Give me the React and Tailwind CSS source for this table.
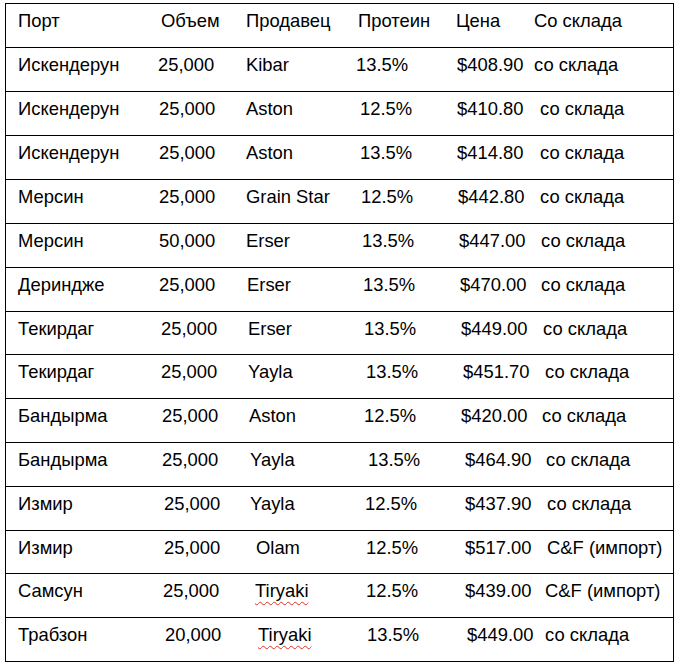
import React from "react";

const COLS = ["w-[138px]", "w-[88px]", "w-[110px]", "w-[98px]", "w-[80px]", "flex-1"];

const rows = [
  { h: "h-[44px]", c: [["Порт", "pl-[0px]"], ["Объем", "pl-[5px]"], ["Продавец", "pl-[2px]"], ["Протеин", "pl-[4px]"], ["Цена", "pl-[4px]"], ["Со склада", "pl-[2px]"]] },
  { h: "h-[44px]", c: [["Искендерун", "pl-[0px]"], ["25,000", "pl-[2px]"], ["Kibar", "pl-[2px]"], ["13.5%", "pl-[2px]"], ["$408.90", "pl-[5px]"], ["со склада", "pl-[2px]"]] },
  { h: "h-[44px]", c: [["Искендерун", "pl-[0px]"], ["25,000", "pl-[3px]"], ["Aston", "pl-[2px]"], ["12.5%", "pl-[6px]"], ["$410.80", "pl-[5px]"], ["со склада", "pl-[8px]"]] },
  { h: "h-[44px]", c: [["Искендерун", "pl-[0px]"], ["25,000", "pl-[3px]"], ["Aston", "pl-[2px]"], ["13.5%", "pl-[6px]"], ["$414.80", "pl-[5px]"], ["со склада", "pl-[8px]"]] },
  { h: "h-[44px]", c: [["Мерсин", "pl-[0px]"], ["25,000", "pl-[3px]"], ["Grain Star", "pl-[2px]"], ["12.5%", "pl-[7px]"], ["$442.80", "pl-[6px]"], ["со склада", "pl-[8px]"]] },
  { h: "h-[44px]", c: [["Мерсин", "pl-[0px]"], ["50,000", "pl-[3px]"], ["Erser", "pl-[2px]"], ["13.5%", "pl-[8px]"], ["$447.00", "pl-[7px]"], ["со склада", "pl-[9px]"]] },
  { h: "h-[44px]", c: [["Дериндже", "pl-[0px]"], ["25,000", "pl-[3px]"], ["Erser", "pl-[3px]"], ["13.5%", "pl-[9px]"], ["$470.00", "pl-[8px]"], ["со склада", "pl-[9px]"]] },
  { h: "h-[43px]", c: [["Текирдаг", "pl-[0px]"], ["25,000", "pl-[5px]"], ["Erser", "pl-[4px]"], ["13.5%", "pl-[10px]"], ["$449.00", "pl-[9px]"], ["со склада", "pl-[11px]"]] },
  { h: "h-[44px]", c: [["Текирдаг", "pl-[0px]"], ["25,000", "pl-[5px]"], ["Yayla", "pl-[4px]"], ["13.5%", "pl-[12px]"], ["$451.70", "pl-[11px]"], ["со склада", "pl-[13px]"]] },
  { h: "h-[44px]", c: [["Бандырма", "pl-[0px]"], ["25,000", "pl-[6px]"], ["Aston", "pl-[5px]"], ["12.5%", "pl-[10px]"], ["$420.00", "pl-[9px]"], ["со склада", "pl-[10px]"]] },
  { h: "h-[44px]", c: [["Бандырма", "pl-[0px]"], ["25,000", "pl-[6px]"], ["Yayla", "pl-[6px]"], ["13.5%", "pl-[14px]"], ["$464.90", "pl-[13px]"], ["со склада", "pl-[14px]"]] },
  { h: "h-[44px]", c: [["Измир", "pl-[0px]"], ["25,000", "pl-[8px]"], ["Yayla", "pl-[6px]"], ["12.5%", "pl-[11px]"], ["$437.90", "pl-[13px]"], ["со склада", "pl-[15px]"]] },
  { h: "h-[43px]", c: [["Измир", "pl-[0px]"], ["25,000", "pl-[8px]"], ["Olam", "pl-[12px]"], ["12.5%", "pl-[12px]"], ["$517.00", "pl-[13px]"], ["C&F (импорт)", "pl-[15px]"]] },
  { h: "h-[44px]", c: [["Самсун", "pl-[0px]"], ["25,000", "pl-[7px]"], ["Tiryaki", "pl-[11px]", true], ["12.5%", "pl-[12px]"], ["$439.00", "pl-[13px]"], ["C&F (импорт)", "pl-[13px]"]] },
  { h: "h-[44px]", c: [["Трабзон", "pl-[0px]"], ["20,000", "pl-[9px]"], ["Tiryaki", "pl-[14px]", true], ["13.5%", "pl-[13px]"], ["$449.00", "pl-[15px]"], ["со склада", "pl-[13px]"]] },
];

export default function App() {
  return (
    <div
      className="w-[681px] h-[670px] bg-white text-black overflow-hidden pt-[3px] pl-[5px]"
      style={{ fontFamily: '"Liberation Sans", Arial, sans-serif' }}
    >
      <div className="w-[669px] border-l border-r border-b border-black">
        {rows.map((r, i) => (
          <div key={i} className={`${r.h} border-t border-black flex pl-[12px] pt-[7px] text-[18.4px] leading-[20px] whitespace-nowrap`}>
            {r.c.map(([t, pl, sp], j) => (
              <div key={j} className={`${COLS[j]} ${pl} shrink-0`}>
                {sp ? (
                  <span className="underline decoration-wavy decoration-[#e0302a] decoration-1 underline-offset-[4px]">{t}</span>
                ) : (
                  t
                )}
              </div>
            ))}
          </div>
        ))}
      </div>
    </div>
  );
}
